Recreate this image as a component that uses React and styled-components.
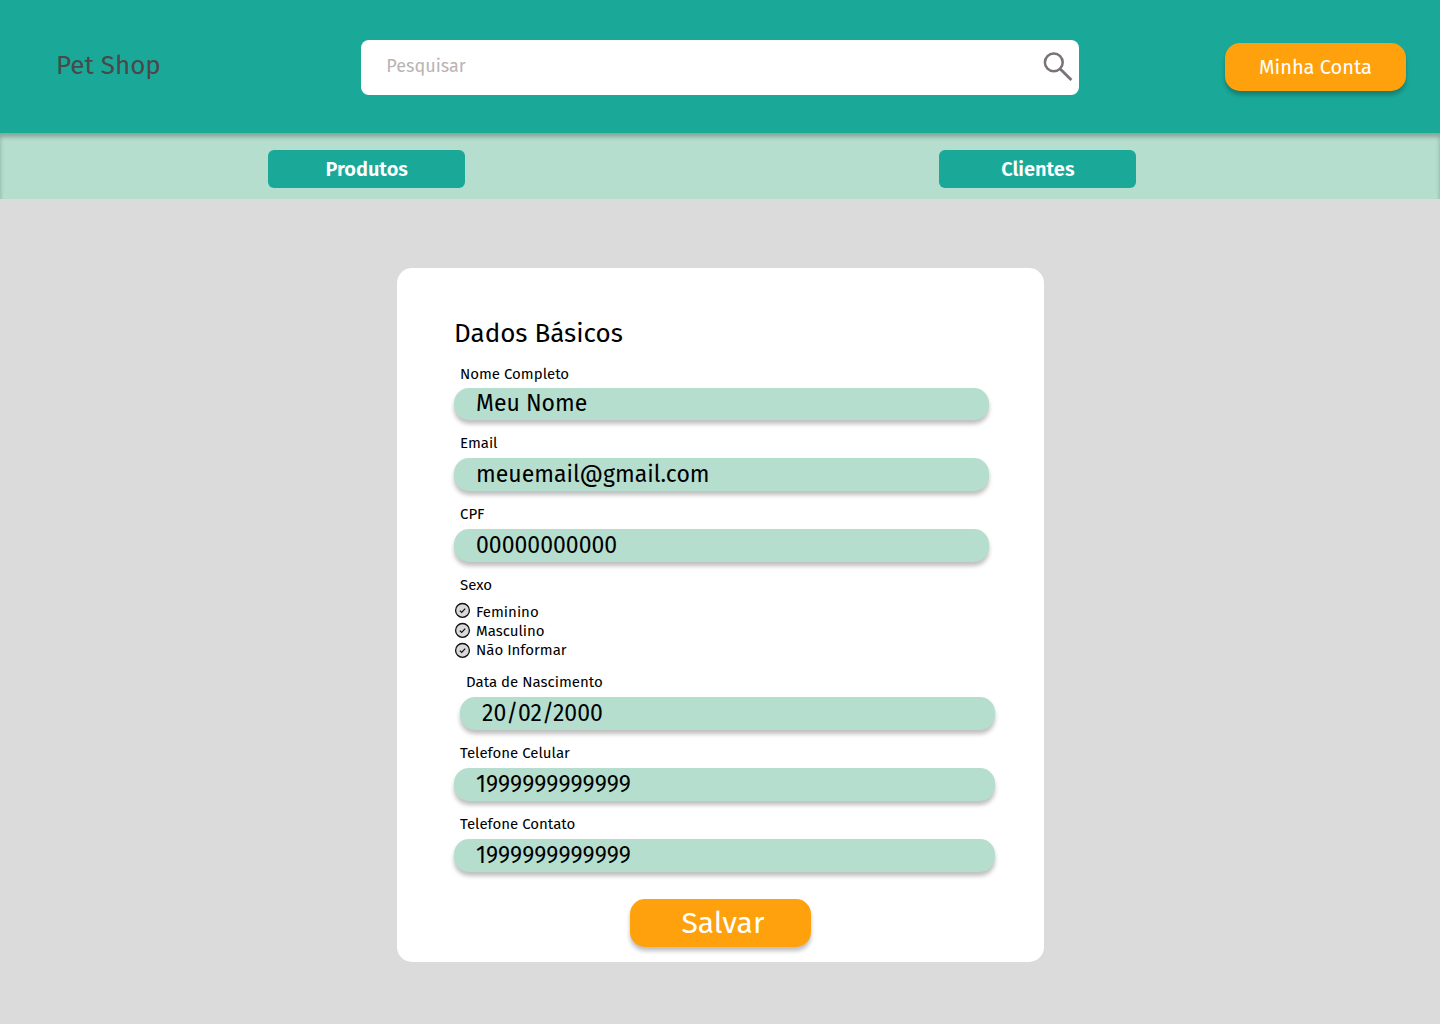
import React from "react";
import styled, { createGlobalStyle } from "styled-components";

const GlobalStyle = createGlobalStyle`
  * { box-sizing: border-box; }
  body {
    margin: 0;
    background: #dbdbdb;
    font-family: "Fira Sans", "Noto Sans", sans-serif;
    color: #000;
  }
  button { font-family: inherit; border: 0; padding: 0; cursor: pointer; }
`;

const Page = styled.div`
  min-height: 1024px;
  display: flex;
  flex-direction: column;
`;

const Header = styled.header`
  height: 133px;
  display: flex;
  align-items: flex-start;
  background: #1aa999;
`;

const Brand = styled.div`
  width: 361px;
  padding: 50px 0 0 56px;
  font-size: 26px;
  line-height: 32px;
  color: #494949;
`;

const Search = styled.div`
  width: 718.4px;
  height: 54.7px;
  margin-top: 40px;
  padding: 0 6px 0 25.3px;
  display: flex;
  justify-content: space-between;
  border-radius: 8px;
  background: #fff;
`;

const Placeholder = styled.span`
  font-size: 18px;
  line-height: 52px;
  color: #b9b4b4;
`;

const SearchIcon = styled.svg`
  width: 30px;
  height: 30px;
  margin-top: 12px;
`;

const ActionButton = styled.button`
  width: 181px;
  height: 47.7px;
  margin: ${(p) => p.$margin};
  border-radius: 15px;
  background: #ffa10c;
  color: #fff;
  font-size: ${(p) => p.$size}px;
  line-height: 48px;
  text-indent: ${(p) => p.$indent ?? 0}px;
  box-shadow: 0 4px 4px rgba(0, 0, 0, 0.25);
`;

const Nav = styled.nav`
  height: 66px;
  padding: 17px 304px 0 268px;
  display: flex;
  justify-content: space-between;
  align-items: flex-start;
  background: #b5dece;
  box-shadow: inset 0 4px 4px rgba(0, 0, 0, 0.25);
`;

const NavButton = styled.button`
  width: 197.3px;
  height: 38.2px;
  border-radius: 6px;
  background: #1aa999;
  color: #fff;
  font-size: 20px;
  font-weight: 600;
  line-height: 38px;
  text-indent: ${(p) => p.$indent ?? 0}px;
`;

const Card = styled.main`
  width: 647px;
  height: 694px;
  margin: 69px 0 0 397px;
  padding: 50px 49px 0 57px;
  display: flex;
  flex-direction: column;
  align-items: flex-start;
  border-radius: 15px;
  background: #fff;
`;

const Title = styled.h1`
  margin: 0 0 14px;
  font-size: 26px;
  font-weight: 400;
  line-height: 32px;
`;

const Field = styled.div`
  width: ${(p) => p.$width ?? 535.3}px;
  margin: 0 0 ${(p) => p.$after ?? 13}px ${(p) => p.$shift ?? 0}px;
`;

const Label = styled.div`
  height: ${(p) => p.$height ?? 25}px;
  padding-left: 6px;
  font-size: 15px;
  line-height: 20px;
`;

const Value = styled.div`
  height: ${(p) => p.$height ?? 33}px;
  padding-left: 22px;
  border-radius: 15px;
  background: #b5dece;
  box-shadow: 0 4px 4px rgba(0, 0, 0, 0.25);
  font-size: 23px;
  line-height: ${(p) => p.$line ?? 33}px;
`;

const Options = styled.div`
  height: 57px;
  margin: 8px 0 12px 1px;
  display: flex;
  gap: 5px;
`;

const Checks = styled.div`
  display: flex;
  flex-direction: column;
  gap: 4px;
`;

const Choices = styled.div`
  display: flex;
  flex-direction: column;
`;

const Choice = styled.span`
  font-size: 15px;
  line-height: 19px;
`;

const CheckSvg = styled.svg`
  display: block;
  width: 16px;
  height: 16px;
  overflow: visible;
`;

const Check = () => (
  <CheckSvg viewBox="0 0 16 16" fill="none">
    <circle cx="7.5" cy="7.4" r="6.9" fill="#d9d9d9" stroke="#111" strokeWidth="1.3" />
    <path d="M4.8 7.6 6.7 9.4 10.2 5.6" stroke="#111" strokeWidth="1.2" />
  </CheckSvg>
);

const choices = ["Feminino", "Masculino", "Não Informar"];

export default function App() {
  return (
    <>
      <GlobalStyle />
      <Page>
        <Header>
          <Brand>Pet Shop</Brand>
          <Search>
            <Placeholder>Pesquisar</Placeholder>
            <SearchIcon viewBox="0 0 30 30" fill="none" stroke="#7b7279">
              <circle cx="10.8" cy="10.4" r="8.9" strokeWidth="2.5" />
              <path d="M17 16.8 28.4 28" strokeWidth="2.8" />
            </SearchIcon>
          </Search>
          <ActionButton $margin="43px 0 0 145.6px" $size={20}>
            Minha Conta
          </ActionButton>
        </Header>
        <Nav>
          <NavButton>Produtos</NavButton>
          <NavButton $indent={1}>Clientes</NavButton>
        </Nav>
        <Card>
          <Title>Dados Básicos</Title>
          <Field>
            <Label $height={24}>Nome Completo</Label>
            <Value $height={32} $line={31}>Meu Nome</Value>
          </Field>
          <Field>
            <Label>Email</Label>
            <Value>meuemail@gmail.com</Value>
          </Field>
          <Field>
            <Label>CPF</Label>
            <Value>00000000000</Value>
          </Field>
          <Label $height={20}>Sexo</Label>
          <Options>
            <Checks>
              {choices.map((name) => <Check key={name} />)}
            </Checks>
            <Choices>
              {choices.map((name) => <Choice key={name}>{name}</Choice>)}
            </Choices>
          </Options>
          <Field $shift={6}>
            <Label>Data de Nascimento</Label>
            <Value>20/02/2000</Value>
          </Field>
          <Field $width={541}>
            <Label>Telefone Celular</Label>
            <Value>1999999999999</Value>
          </Field>
          <Field $width={541} $after={27}>
            <Label>Telefone Contato</Label>
            <Value>1999999999999</Value>
          </Field>
          <ActionButton $margin="0 0 0 176px" $size={30} $indent={5}>
            Salvar
          </ActionButton>
        </Card>
      </Page>
    </>
  );
}
